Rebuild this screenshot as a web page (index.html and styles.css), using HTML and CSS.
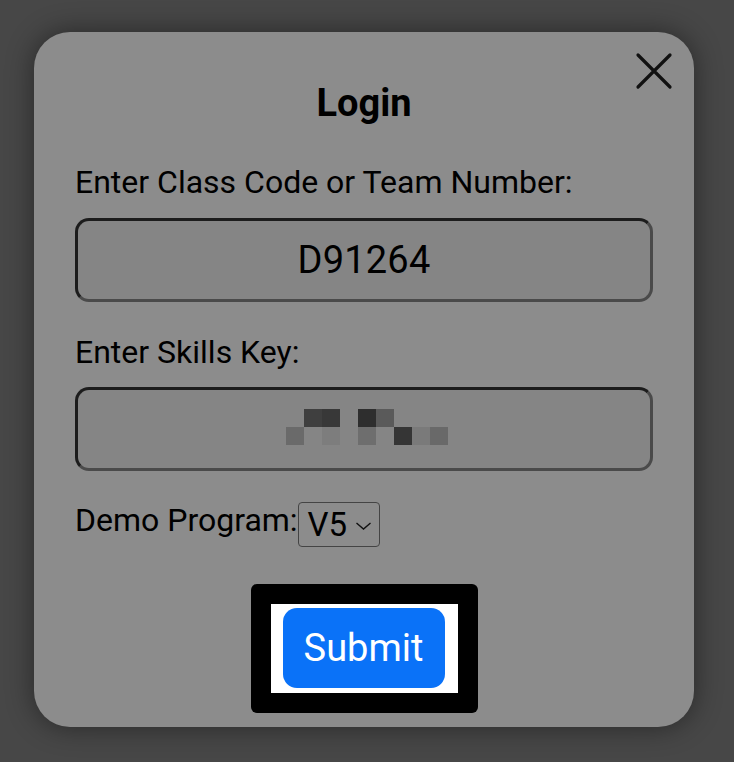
FILE: index.html
```html
<!DOCTYPE html>
<html>
<head>
<meta charset="utf-8">
<link rel="stylesheet" href="styles.css">
</head>
<body>
<div class="backdrop">
  <div class="modal">
    <button class="close" aria-label="Close">
      <svg width="38" height="38" viewBox="0 0 38 38"><path d="M3 3 L35 35 M35 3 L3 35" stroke="#111" stroke-width="3.2" stroke-linecap="round" fill="none"/></svg>
    </button>
    <h1 class="title">Login</h1>
    <label class="label first">Enter Class Code or Team Number:</label>
    <div class="field"><span class="value">D91264</span></div>
    <label class="label second">Enter Skills Key:</label>
    <div class="field">
      <div class="pixels">
        <i></i><i style="background:#3f3f3f"></i><i style="background:#383838"></i><i></i><i style="background:#2e2e2e"></i><i style="background:#5a5a5a"></i><i></i><i></i><i></i>
        <i style="background:#6a6a6a"></i><i></i><i style="background:#7d7d7d"></i><i></i><i style="background:#6e6e6e"></i><i></i><i style="background:#353535"></i><i style="background:#7a7a7a"></i><i style="background:#696969"></i>
      </div>
    </div>
    <div class="demo">
      <span class="demo-label">Demo Program:</span>
      <span class="select">V5<svg class="chev" width="17" height="8" viewBox="0 0 17 8"><path d="M1.5 1 L8.5 7 L15.5 1" stroke="#111" stroke-width="1.4" fill="none"/></svg></span>
    </div>
    <div class="submit-row">
      <div class="focus-ring">
        <div class="white-box">
          <button class="submit">Submit</button>
        </div>
      </div>
    </div>
  </div>
</div>
</body>
</html>
```
FILE: styles.css
```css
html, body {
  margin: 0;
  padding: 0;
}
body {
  width: 734px;
  height: 762px;
  background: #474747;
  font-family: Roboto, "Liberation Sans", sans-serif;
  overflow: hidden;
}
.backdrop {
  padding: 32px 40px 0 34px;
}
.modal {
  position: relative;
  width: 660px;
  height: 695px;
  box-sizing: border-box;
  background: #8c8c8c;
  border-radius: 36px;
  box-shadow: 0 0 28px rgba(0,0,0,0.45);
  padding: 0 41px;
  display: flex;
  flex-direction: column;
}
.close {
  position: absolute;
  top: 20px;
  left: 601px;
  width: 38px;
  height: 38px;
  padding: 0;
  border: 0;
  background: none;
  display: block;
}
.close svg { display: block; }
.title {
  margin: 49px 0 0;
  text-align: center;
  font-size: 38px;
  font-weight: 700;
  line-height: 44px;
  color: #000;
}
.label {
  display: block;
  font-size: 32px;
  line-height: 38px;
  color: #000;
}
.label.first { margin-top: 38px; }
.label.second { margin-top: 31px; }
.field {
  margin-top: 17px;
  height: 84px;
  box-sizing: border-box;
  border: 3px solid #1c1c1c;
  border-bottom-color: #4a4a4a;
  border-right-color: #4a4a4a;
  border-radius: 14px;
  background: #858585;
  display: flex;
  align-items: center;
  justify-content: center;
  flex-shrink: 0;
}
.label.second + .field { margin-top: 16px; }
.value {
  font-size: 38px;
  color: #000;
  letter-spacing: 0.2px;
}
.pixels {
  display: grid;
  grid-template-columns: repeat(9, 18px);
  grid-template-rows: repeat(2, 18px);
  margin-left: 6px;
  margin-bottom: 4px;
}
.demo {
  margin-top: 31px;
  display: flex;
  align-items: flex-start;
  height: 45px;
}
.demo-label {
  font-size: 32px;
  line-height: 38px;
  margin-top: -1px;
  color: #000;
}
.select {
  height: 45px;
  width: 82px;
  box-sizing: border-box;
  border: 1.5px solid #444;
  border-radius: 4px;
  display: flex;
  align-items: center;
  padding-left: 9px;
  font-size: 33px;
  color: #000;
}
.chev { margin-left: 8px; margin-top: 3px; }
.submit-row {
  margin-top: 37px;
  display: flex;
  justify-content: center;
}
.focus-ring {
  background: #000;
  padding: 20px;
  border-radius: 6px;
}
.white-box {
  background: #fff;
  padding: 4px 13px 5px 12px;
}
.submit {
  display: block;
  width: 162px;
  height: 80px;
  border: 0;
  border-radius: 14px;
  background: #0a72f8;
  color: #fff;
  font-family: Roboto, "Liberation Sans", sans-serif;
  font-size: 38px;
  padding: 0;
}
```
